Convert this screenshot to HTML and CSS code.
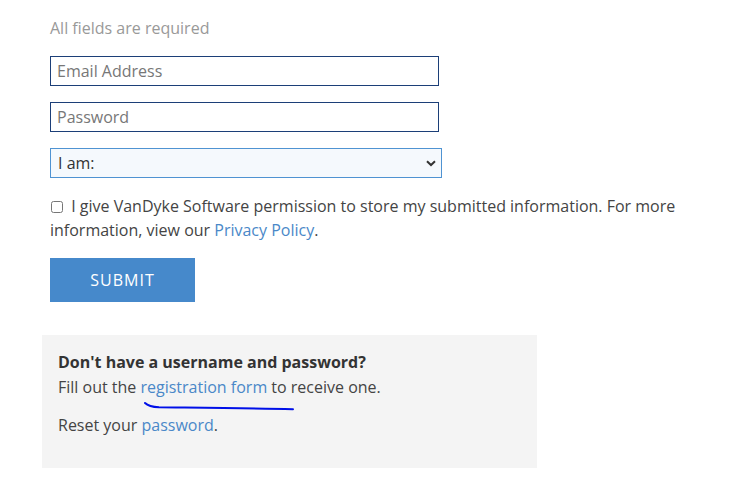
FILE: index.html
```html
<!DOCTYPE html>
<html>
<head>
<meta charset="utf-8">
<link rel="stylesheet" href="styles.css">
</head>
<body>
<div class="page">
  <form class="login">
    <p class="note">All fields are required</p>
    <input class="field" type="email" placeholder="Email Address">
    <input class="field" type="password" placeholder="Password">
    <div class="select-wrap">
      <select class="role">
        <option>I am:</option>
      </select>
      <svg class="chev" width="10" height="7" viewBox="0 0 10 7"><path d="M1 1.2 L5 5 L9 1.2" fill="none" stroke="#333" stroke-width="2"/></svg>
    </div>
    <label class="consent"><input type="checkbox" class="cb"> I give VanDyke Software permission to store my submitted information. For more information, view our <a href="#">Privacy Policy</a>.</label>
    <button type="button" class="submit">SUBMIT</button>
  </form>
  <div class="help">
    <p class="help-head"><strong>Don't have a username and password?</strong><br>Fill out the <a href="#">registration form</a> to receive one.</p>
    <p>Reset your <a href="#">password</a>.</p>
    <svg class="scribble" width="160" height="12" viewBox="0 0 160 12"><path d="M2 2 C5 5 9 6 16 6.3 C60 6.8 110 7.2 150 8.2" fill="none" stroke="#0010e8" stroke-width="2" stroke-linecap="round"/></svg>
  </div>
</div>
</body>
</html>
```
FILE: styles.css
```css
html, body {
  margin: 0;
  padding: 0;
  background: #fff;
}
body {
  font-family: "Open Sans", "Noto Sans", sans-serif;
  font-size: 16px;
  line-height: 24px;
  color: #444;
}
a {
  color: #4a88c8;
  text-decoration: none;
}
.page {
  padding: 16px 0 0 42px;
}
.login {
  display: flex;
  flex-direction: column;
  align-items: flex-start;
  padding-left: 8px;
}
.note {
  margin: 0 0 16px;
  color: #999;
}
.field {
  box-sizing: border-box;
  width: 389px;
  height: 30px;
  margin: 0 0 16px;
  padding: 0 6px;
  border: 1px solid #1c3f78;
  border-radius: 0;
  font-family: inherit;
  font-size: 16px;
  color: #333;
  background: #fff;
  outline: none;
}
.field::placeholder {
  color: #777;
}
.select-wrap {
  position: relative;
  width: 392px;
  height: 30px;
}
.role {
  box-sizing: border-box;
  width: 100%;
  height: 30px;
  padding: 0 0 0 7px;
  border: 1px solid #4f93d2;
  border-radius: 0;
  background: #f5f9fd;
  font-family: inherit;
  font-size: 16px;
  color: #333;
  appearance: none;
  -webkit-appearance: none;
}
.chev {
  position: absolute;
  right: 6px;
  top: 12px;
  pointer-events: none;
}
.consent {
  display: block;
  margin: 16px 0 0;
  width: 640px;
  line-height: 24px;
  color: #444;
}
.cb {
  width: 12px;
  height: 12px;
  margin: 0 4px 0 1px;
  vertical-align: -1px;
}
.submit {
  margin-top: 16px;
  width: 145px;
  height: 44px;
  border: 0;
  background: #4689cb;
  color: #fff;
  font-family: inherit;
  font-size: 16px;
  letter-spacing: 1px;
  padding: 0;
}
.help {
  position: relative;
  margin-top: 33px;
  width: 495px;
  box-sizing: border-box;
  padding: 15px 16px 31px;
  background: #f4f4f4;
}
.help p {
  margin: 0;
}
.help-head {
  line-height: 25px;
  margin-bottom: 13px !important;
}
.help strong {
  color: #333;
}
.scribble {
  position: absolute;
  left: 101px;
  top: 66px;
}
```
